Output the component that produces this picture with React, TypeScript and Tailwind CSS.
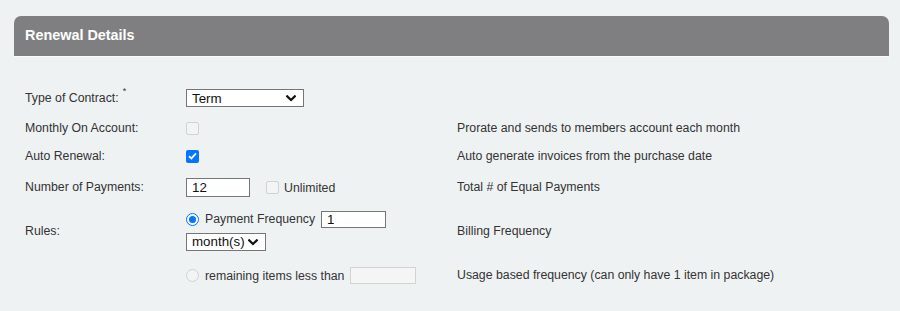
import React from 'react';

const Chevron = () => (
  <svg width="10" height="7" viewBox="0 0 10 7" className="shrink-0">
    <path d="M1.2 1.3 L5 5 L8.8 1.3" fill="none" stroke="#111" strokeWidth="2.2" strokeLinecap="square" />
  </svg>
);

const Select: React.FC<{ value: string; width: string }> = ({ value, width }) => (
  <div className={`${width} h-[18px] flex items-center justify-between border border-[#767676] bg-white pl-[5px] pr-[7px] text-[13.33px] text-[#111] leading-none`}>
    <span>{value}</span>
    <Chevron />
  </div>
);

const TextBox: React.FC<{ value?: string; width: string; disabled?: boolean; height?: string }> = ({
  value,
  width,
  disabled,
  height = 'h-[18px]',
}) => (
  <div
    className={`${width} ${height} flex items-center pl-[5px] text-[13.33px] leading-none text-[#111] ${
      disabled ? 'border border-[#d3d3d3] bg-[#f5f5f5]' : 'border border-[#767676] bg-white'
    }`}
  >
    {value}
  </div>
);

const Checkbox: React.FC<{ checked?: boolean }> = ({ checked }) =>
  checked ? (
    <div className="w-[13px] h-[13px] rounded-[2px] bg-[#0075ff] flex items-center justify-center">
      <svg width="9" height="8" viewBox="0 0 9 8">
        <path d="M1 4.2 L3.4 6.4 L8 1.4" fill="none" stroke="#fff" strokeWidth="1.9" />
      </svg>
    </div>
  ) : (
    <div className="w-[13px] h-[13px] rounded-[2px] border border-[#d0d3d6] bg-[#f2f4f5]" />
  );

const Radio: React.FC<{ checked?: boolean }> = ({ checked }) =>
  checked ? (
    <div className="w-[13px] h-[13px] rounded-full border-[1.5px] border-[#0075ff] bg-white flex items-center justify-center">
      <div className="w-[7px] h-[7px] rounded-full bg-[#0075ff]" />
    </div>
  ) : (
    <div className="w-[13px] h-[13px] rounded-full border border-[#d0d3d6] bg-[#f2f4f5]" />
  );

const Row: React.FC<{ label?: React.ReactNode; hint?: string; className: string; children?: React.ReactNode }> = ({
  label,
  hint,
  className,
  children,
}) => (
  <div className={`grid grid-cols-[161px_271px_1fr] items-center ${className}`}>
    <div>{label}</div>
    <div className="flex items-center">{children}</div>
    <div>{hint}</div>
  </div>
);

export default function App() {
  return (
    <div
      className="w-[900px] h-[311px] bg-[#eff2f3] pl-[14px] pt-[16px] text-[12.3px] text-[#333] overflow-hidden"
      style={{ fontFamily: '"Liberation Sans", Arial, sans-serif' }}
    >
      <div className="w-[875px]">
        <div className="h-[41px] rounded-t-[7px] bg-[#7f7f82] border-b border-[#fafbfb] flex items-center pl-[11px]">
          <h2 className="text-[14.4px] font-bold text-white">Renewal Details</h2>
        </div>

        <div className="pl-[11px]">
          <Row
            className="mt-[32px] h-[18px]"
            label={
              <span className="flex items-start">
                Type of Contract:
                <span className="ml-[4px] text-[9px] leading-none -mt-[2px]">*</span>
              </span>
            }
          >
            <Select value="Term" width="w-[118px]" />
          </Row>

          <Row
            className="mt-[12px] h-[18px]"
            label="Monthly On Account:"
            hint="Prorate and sends to members account each month"
          >
            <Checkbox />
          </Row>

          <Row className="mt-[10px] h-[18px]" label="Auto Renewal:" hint="Auto generate invoices from the purchase date">
            <Checkbox checked />
          </Row>

          <Row className="mt-[12px] h-[19px]" label="Number of Payments:" hint="Total # of Equal Payments">
            <TextBox value="12" width="w-[64px]" height="h-[19px]" />
            <div className="ml-[16px] mt-[1px]">
              <Checkbox />
            </div>
            <span className="ml-[5px] mt-[2px]">Unlimited</span>
          </Row>

          <Row className="mt-[15px] h-[39px]" label="Rules:" hint="Billing Frequency">
            <div className="flex flex-col gap-[5px] self-start">
              <div className="flex items-center h-[17px]">
                <Radio checked />
                <span className="ml-[6px] mr-[6px]">Payment Frequency</span>
                <TextBox value="1" width="w-[65px]" height="h-[17px]" />
              </div>
              <Select value="month(s)" width="w-[80px]" />
            </div>
          </Row>

          <Row className="mt-[15px] h-[17px]" hint="Usage based frequency (can only have 1 item in package)">
            <Radio />
            <span className="ml-[6px] mr-[6px] mt-[2px]">remaining items less than</span>
            <TextBox width="w-[66px]" disabled height="h-[17px]" />
          </Row>
        </div>
      </div>
    </div>
  );
}
